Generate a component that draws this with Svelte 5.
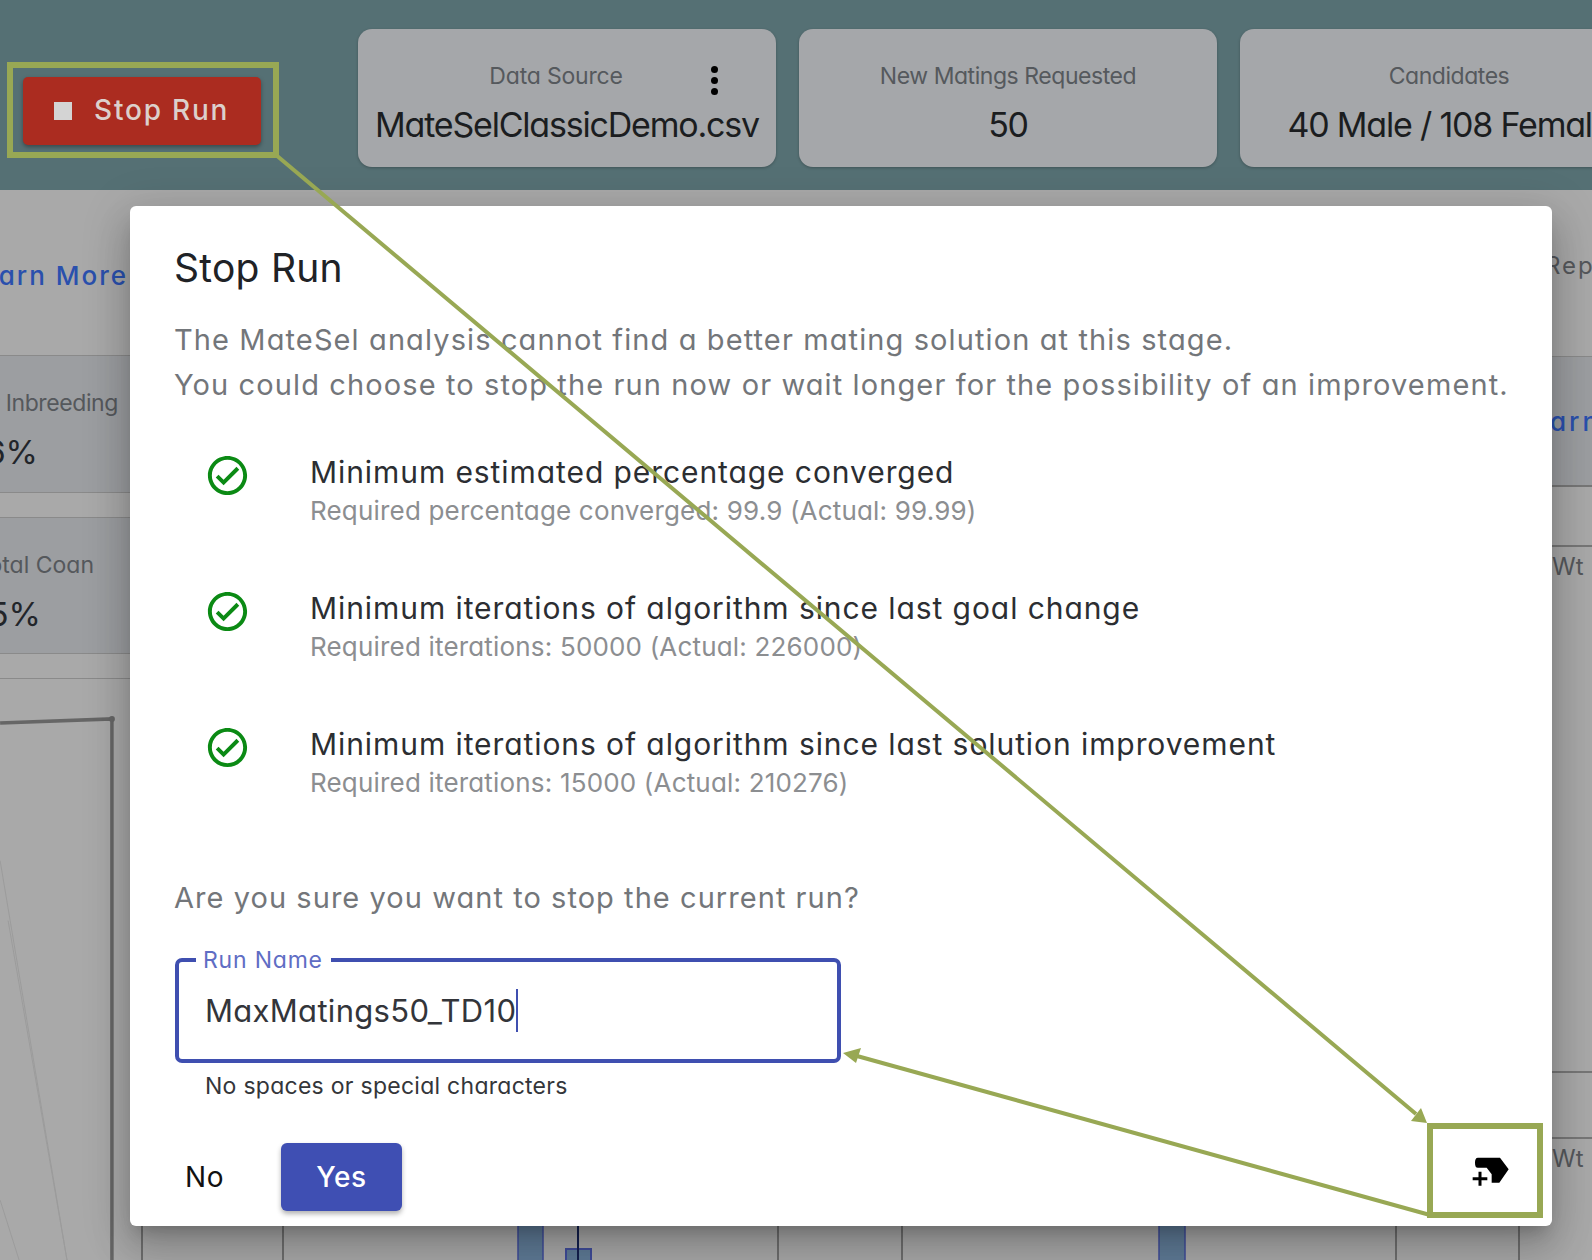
<script lang="ts">
  // Stop Run confirmation, with the page behind it and the tutorial annotations on top.
  const cards = [
    { label: 'Data Source', value: 'MateSelClassicDemo.csv', menu: true },
    { label: 'New Matings Requested', value: '50', menu: false },
    { label: 'Candidates', value: '40 Male / 108 Female', menu: false }
  ];

  const criteria = [
    {
      title: 'Minimum estimated percentage converged',
      detail: 'Required percentage converged: 99.9 (Actual: 99.99)'
    },
    {
      title: 'Minimum iterations of algorithm since last goal change',
      detail: 'Required iterations: 50000 (Actual: 226000)'
    },
    {
      title: 'Minimum iterations of algorithm since last solution improvement',
      detail: 'Required iterations: 15000 (Actual: 210276)'
    }
  ];

  const chartLines = [142, 283, 778, 902, 1396, 1519];
</script>

<div class="page">
  <header class="topbar">
    <button class="stop" type="button">
      <span class="stop-square"></span>
      <span class="stop-text">Stop Run</span>
    </button>
    {#each cards as card}
      <section class="card">
        <div class="card-label">{card.label}</div>
        <div class="card-value">{card.value}</div>
        {#if card.menu}
          <span class="dots"><i></i><i></i><i></i></span>
        {/if}
      </section>
    {/each}
  </header>

  <div class="under">
    <aside class="strip left">
      <div class="learn">Learn More</div>
      <div class="stat first">
        <div class="stat-label">Avr Inbreeding</div>
        <div class="stat-value">6%</div>
      </div>
      <div class="stat second">
        <div class="stat-label">Total Coan</div>
        <div class="stat-value">5%</div>
      </div>
      <svg class="plot" viewBox="0 678 130 582" aria-hidden="true">
        <path d="M0 860 L67 1260 M8 920 L67 1260 M0 1200 L19 1260" fill="none" stroke="#9c9c9c" stroke-width="1" />
        <path d="M0 722 L112 718 V1260" fill="none" stroke="#666" stroke-width="3.5" />
        <circle cx="112" cy="718" r="3" fill="#666" />
      </svg>
    </aside>

    <svg class="chart" viewBox="130 1226 1422 34" preserveAspectRatio="none" aria-hidden="true">
      {#each chartLines as x}
        <line x1={x} y1="1226" x2={x} y2="1260" stroke="#5c5c5c" stroke-width="1.5" />
      {/each}
      <rect x="518" y="1220" width="25" height="50" fill="#5f7b97" stroke="#3f4c9a" stroke-width="1.5" />
      <rect x="1159" y="1220" width="26" height="50" fill="#5f7b97" stroke="#3f4c9a" stroke-width="1.5" />
      <rect x="566" y="1249" width="25" height="20" fill="#5f7b97" stroke="#3f4c9a" stroke-width="2" />
      <line x1="578" y1="1226" x2="578" y2="1260" stroke="#14204f" stroke-width="2" />
    </svg>

    <aside class="strip right">
      <div class="rep">Rep</div>
      <div class="r-card"><span class="r-learn">arn</span></div>
      <div class="r-gap"></div>
      <div class="r-wt"><span>Wt</span></div>
      <div class="r-gap short"></div>
      <div class="r-wt"><span>Wt</span></div>
    </aside>
  </div>

  <div class="dialog" role="dialog">
    <h2>Stop Run</h2>
    <p class="intro">
      The MateSel analysis cannot find a better mating solution at this stage.<br />
      You could choose to stop the run now or wait longer for the possibility of an improvement.
    </p>

    <ul class="criteria">
      {#each criteria as item}
        <li>
          <svg class="check" viewBox="0 0 24 24" aria-hidden="true">
            <path
              fill="#0b8a14"
              d="M12 2C6.48 2 2 6.48 2 12s4.48 10 10 10 10-4.48 10-10S17.52 2 12 2zm0 18c-4.41 0-8-3.59-8-8s3.59-8 8-8 8 3.59 8 8-3.59 8-8 8zm4.59-12.42L10 14.17l-2.59-2.58L6 13l4 4 8-8z"
            />
          </svg>
          <div>
            <div class="crit-title">{item.title}</div>
            <div class="crit-detail">{item.detail}</div>
          </div>
        </li>
      {/each}
    </ul>

    <p class="question">Are you sure you want to stop the current run?</p>

    <div class="field">
      <span class="field-label">Run Name</span>
      <span class="field-value">MaxMatings50_TD10</span><span class="caret"></span>
    </div>
    <div class="helper">No spaces or special characters</div>

    <div class="actions">
      <button class="no" type="button">No</button>
      <button class="yes" type="button">Yes</button>
      <span class="tour-icon">
        <svg viewBox="0 0 180 150" width="60" height="50" aria-hidden="true">
          <path
            d="M54 38 H120 L146 73 L118 113 H95 V88 L80 68 H54 C47 68 45 62 45 53 C45 44 47 38 54 38 Z"
            fill="#000"
          />
          <path d="M60 80 V122 M38 101 H82" stroke="#000" stroke-width="9" fill="none" />
        </svg>
      </span>
    </div>
  </div>

  <svg class="notes" viewBox="0 0 1592 1260" aria-hidden="true">
    <g fill="none" stroke="#98a854">
      <rect x="10" y="65" width="266" height="90" stroke-width="6" />
      <rect x="1430" y="1126" width="110" height="89" stroke-width="6" />
      <path d="M276 155 L1416 1114" stroke-width="4" />
      <path d="M1430 1215 L857 1056" stroke-width="4" />
    </g>
    <g fill="#98a854">
      <path d="M1427 1123 L1421 1108 L1411 1121 Z" />
      <path d="M843 1053 L861 1048 L856 1063 Z" />
    </g>
  </svg>
</div>

<style>
  :global(body) {
    margin: 0;
    background: #a9a9a9;
  }

  .page {
    position: relative;
    width: 1592px;
    height: 1260px;
    overflow: hidden;
    font-family: Inter, Roboto, sans-serif;
    font-feature-settings: 'cv11';
    background: #a9a9a9;
    color: #1b1d20;
  }

  .topbar {
    display: flex;
    align-items: flex-start;
    gap: 23px;
    height: 190px;
    box-sizing: border-box;
    padding: 29px 0 0 23px;
    background: #557074;
  }

  .stop {
    flex: none;
    display: flex;
    align-items: center;
    gap: 22px;
    width: 238px;
    height: 68px;
    margin: 48px 74px 0 0;
    padding: 0 0 0 31px;
    box-sizing: border-box;
    border: 0;
    border-radius: 5px;
    background: #ab2c20;
    box-shadow: 0 2px 4px rgba(0, 0, 0, 0.35);
    color: #dcd0cc;
    font: 500 28px Inter, Roboto, sans-serif;
    letter-spacing: 1.8px;
    white-space: nowrap;
  }

  .stop-text {
    padding-bottom: 3px;
  }

  .stop-square {
    width: 18px;
    height: 18px;
    background: #d4d4d4;
  }

  .card {
    position: relative;
    flex: none;
    width: 418px;
    height: 138px;
    box-sizing: border-box;
    padding-top: 33px;
    border-radius: 14px;
    background: #a5a7aa;
    box-shadow: 0 1px 3px rgba(0, 0, 0, 0.25);
    text-align: center;
  }

  .card:nth-of-type(1) .card-label {
    padding-right: 22px;
    letter-spacing: -0.2px;
  }

  .card-label {
    font-size: 23px;
    line-height: 28px;
    letter-spacing: -0.45px;
    color: #55595d;
  }

  .card-value {
    margin-top: 13px;
    font-size: 34px;
    line-height: 44px;
    white-space: nowrap;
    letter-spacing: -1.2px;
  }

  .dots {
    position: absolute;
    top: 37px;
    right: 58px;
    display: flex;
    flex-direction: column;
    gap: 4px;
  }

  .dots i {
    width: 7px;
    height: 7px;
    border-radius: 50%;
    background: #000;
  }

  .under {
    display: grid;
    grid-template-columns: 130px 1422px 40px;
    height: 1070px;
  }

  .strip {
    display: flex;
    flex-direction: column;
    overflow: hidden;
    min-width: 0;
    color: #55585c;
  }

  .left {
    font-size: 23px;
  }

  .learn {
    flex: none;
    height: 166px;
    box-sizing: border-box;
    padding: 70px 2px 0 0;
    border-bottom: 1.5px solid #8a8a8a;
    text-align: right;
    white-space: nowrap;
    color: #2a50ad;
    font-weight: 500;
    font-size: 26px;
    letter-spacing: 2px;
    direction: rtl;
  }

  .stat {
    flex: none;
    height: 137px;
    margin-bottom: 24px;
    box-sizing: border-box;
    padding: 32px 12px 0 0;
    background: #9c9ea1;
    border-bottom: 1.5px solid #8a8a8a;
    text-align: right;
    white-space: nowrap;
  }

  .stat.first .stat-label {
    letter-spacing: -0.4px;
  }

  .stat.second {
    border-top: 1.5px solid #8a8a8a;
    padding-right: 36px;
    margin-bottom: 24px;
  }

  .stat.second .stat-value {
    width: 41px;
  }

  .stat-label {
    line-height: 30px;
    direction: rtl;
  }

  .stat-value {
    width: 38px;
    margin-top: 14px;
    font-size: 33px;
    line-height: 40px;
    color: #22252a;
    overflow: hidden;
    direction: rtl;
    text-align: left;
  }

  .plot {
    flex: none;
    width: 130px;
    height: 582px;
    border-top: 1.5px solid #8a8a8a;
    box-sizing: border-box;
  }

  .chart {
    align-self: end;
    width: 1422px;
    height: 34px;
  }

  .right {
    font-size: 24px;
  }

  .rep {
    flex: none;
    height: 167px;
    box-sizing: border-box;
    padding-top: 61px;
    border-bottom: 1.5px solid #8a8a8a;
    letter-spacing: 2px;
    white-space: nowrap;
    margin-left: -7px;
  }

  .r-card {
    flex: none;
    height: 130px;
    box-sizing: border-box;
    padding-top: 50px;
    background: #9c9ea1;
    border-bottom: 2px solid #777;
  }

  .r-learn {
    display: block;
    margin-left: -2px;
    color: #2a50ad;
    font-weight: 500;
    font-size: 26px;
    letter-spacing: 3px;
    line-height: 30px;
  }

  .r-gap {
    flex: none;
    height: 60px;
    box-sizing: border-box;
    border-bottom: 2px solid #777;
  }

  .r-gap.short {
    height: 66px;
  }

  .r-wt {
    flex: none;
    height: 526px;
    box-sizing: border-box;
    border-bottom: 2px solid #777;
  }

  .r-wt span {
    display: block;
    padding-top: 5px;
    margin-left: 0;
  }

  .dialog {
    position: absolute;
    top: 206px;
    left: 130px;
    width: 1422px;
    height: 1020px;
    box-sizing: border-box;
    padding: 37px 0 0 44px;
    background: #fff;
    border-radius: 6px;
    box-shadow:
      0 11px 15px -7px rgba(0, 0, 0, 0.2),
      0 24px 38px 3px rgba(0, 0, 0, 0.14),
      0 9px 46px 8px rgba(0, 0, 0, 0.12);
  }

  h2 {
    margin: 0;
    font-weight: 400;
    font-size: 39px;
    line-height: 50px;
    letter-spacing: 0.25px;
    color: #202226;
  }

  .intro {
    margin: 24px 0 0;
    font-size: 29px;
    line-height: 45px;
    letter-spacing: 1.11px;
    color: #73767a;
    white-space: nowrap;
  }

  .criteria {
    margin: 45px 0 0;
    padding: 0;
    list-style: none;
  }

  .criteria li {
    display: flex;
    align-items: flex-start;
    gap: 59px;
    height: 136px;
    padding-left: 30px;
  }

  .check {
    flex: none;
    width: 47px;
    height: 47px;
  }

  .crit-title {
    font-size: 30px;
    line-height: 40px;
    letter-spacing: 0.92px;
    color: #2c2e32;
    white-space: nowrap;
  }

  .crit-detail {
    margin-top: 2px;
    font-size: 26px;
    line-height: 34px;
    letter-spacing: 0.18px;
    color: #8c8e91;
    white-space: nowrap;
  }

  .question {
    margin: 16px 0 0;
    font-size: 29px;
    line-height: 44px;
    letter-spacing: 1.05px;
    color: #73767a;
  }

  .field {
    position: relative;
    display: flex;
    align-items: center;
    width: 666px;
    height: 105px;
    margin: 38px 0 0 1px;
    padding: 0 0 0 26px;
    box-sizing: border-box;
    border: 4px solid #3f4fb0;
    border-radius: 7px;
  }

  .field-label {
    position: absolute;
    top: -15px;
    left: 17px;
    padding: 0 8px 0 7px;
    background: #fff;
    font-size: 23px;
    line-height: 26px;
    letter-spacing: 0.8px;
    color: #5f6dc4;
  }

  .field-value {
    font-size: 31px;
    letter-spacing: 0.3px;
    color: #33353a;
  }

  .caret {
    width: 1.5px;
    height: 43px;
    background: #3f4fb0;
  }

  .helper {
    margin: 8px 0 0 31px;
    font-size: 23px;
    line-height: 30px;
    letter-spacing: 0.27px;
    color: #34363a;
  }

  .actions {
    display: flex;
    align-items: center;
    height: 68px;
    margin-top: 42px;
    padding-left: 11px;
  }

  .no {
    width: 96px;
    padding: 0;
    border: 0;
    background: none;
    text-align: left;
    font: 400 28px Inter, Roboto, sans-serif;
    letter-spacing: 0.6px;
    color: #111;
  }

  .yes {
    width: 121px;
    height: 68px;
    padding: 0;
    border: 0;
    border-radius: 6px;
    background: #3f4fb3;
    box-shadow: 0 3px 5px rgba(0, 0, 0, 0.3);
    font: 500 28px Inter, Roboto, sans-serif;
    letter-spacing: 0.6px;
    color: #fff;
  }

  .tour-icon {
    display: flex;
    margin: -14px 32px 0 auto;
  }

  .notes {
    position: absolute;
    top: 0;
    left: 0;
    width: 1592px;
    height: 1260px;
    pointer-events: none;
  }
</style>
